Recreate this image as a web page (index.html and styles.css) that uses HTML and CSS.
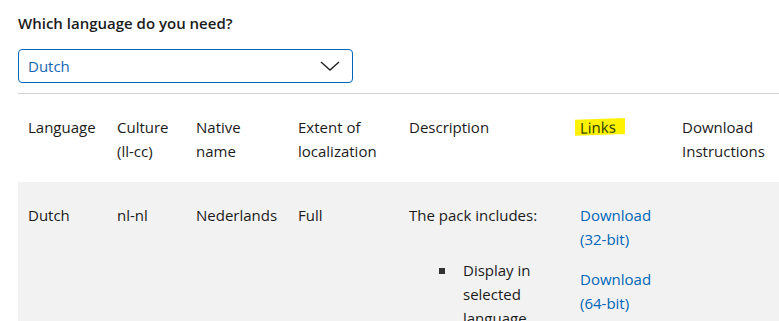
FILE: index.html
```html
<!DOCTYPE html>
<html lang="en">
<head>
  <meta charset="UTF-8">
  <title>Language packs</title>
  <link rel="stylesheet" href="styles.css">
</head>
<body>

  <div class="page">
    <!-- Language picker -->
    <h3 class="picker-title">Which language do you need?</h3>
    <div class="picker">
      <span class="picker-value">Dutch</span>
      <svg class="picker-chevron" width="20" height="10" viewBox="0 0 20 10">
        <path d="M1 1 L10 9 L19 1" fill="none" stroke="#222" stroke-width="1.4"/>
      </svg>
    </div>

    <hr class="divider">

    <!-- Pack table -->
    <table class="packs">
      <colgroup>
        <col style="width:89px">
        <col style="width:79px">
        <col style="width:102px">
        <col style="width:111px">
        <col style="width:171px">
        <col style="width:102px">
        <col style="width:130px">
      </colgroup>
      <thead>
        <tr>
          <th>Language</th>
          <th>Culture (ll-cc)</th>
          <th>Native name</th>
          <th>Extent of localization</th>
          <th>Description</th>
          <th><span class="marker">Links</span></th>
          <th>Download Instructions</th>
        </tr>
      </thead>
      <tbody>
        <tr>
          <td>Dutch</td>
          <td>nl-nl</td>
          <td>Nederlands</td>
          <td>Full</td>
          <td>
            <p class="desc">The pack includes:</p>
            <ul class="desc-list">
              <li>Display in selected language</li>
            </ul>
          </td>
          <td>
            <a class="dl" href="#">Download (32-bit)</a>
            <a class="dl" href="#">Download (64-bit)</a>
          </td>
          <td></td>
        </tr>
      </tbody>
    </table>
  </div>

</body>
</html>
```

FILE: styles.css
```css
body { margin: 0; font-family: "Open Sans", "Noto Sans", sans-serif; color: #1b1b1b; background: #fff; overflow: hidden; }
.page { padding-left: 18px; width: 900px; }

.picker-title { margin: 0; padding-top: 12px; font-size: 15px; font-weight: 600; line-height: 22px; }
.picker { display: flex; align-items: center; justify-content: space-between; box-sizing: border-box; width: 335px; height: 34px; margin-top: 15px; padding: 0 12px 0 9px; border: 1px solid #0067b8; border-radius: 4px; }
.picker-value { font-size: 15px; color: #1567b4; }
.picker-chevron { display: block; }

.divider { margin: 10px 0 0; border: none; border-top: 1px solid #d2d2d2; }

.packs { border-collapse: collapse; table-layout: fixed; width: 784px; font-size: 15px; line-height: 24px; }
.packs th, .packs td { padding: 21px 10px 20px; text-align: left; vertical-align: top; font-weight: 400; }
.packs thead th { padding-top: 21px; padding-bottom: 19px; }
.packs tbody tr { background: #f2f2f2; }

.marker { display: inline-block; margin-left: -5px; padding: 0 9px 0 5px; line-height: 16px; background: #fff200; color: #2c3a00; transform: skewY(-2deg); }

.desc { margin: 0; }
.desc-list { margin: 31px 0 0; padding-left: 54px; list-style: none; }
.desc-list li { position: relative; }
.desc-list li::before { content: ""; position: absolute; left: -24px; top: 10px; width: 6px; height: 6px; background: #333; }

.dl { display: block; color: #0067b8; text-decoration: none; margin-bottom: 16px; }
```
